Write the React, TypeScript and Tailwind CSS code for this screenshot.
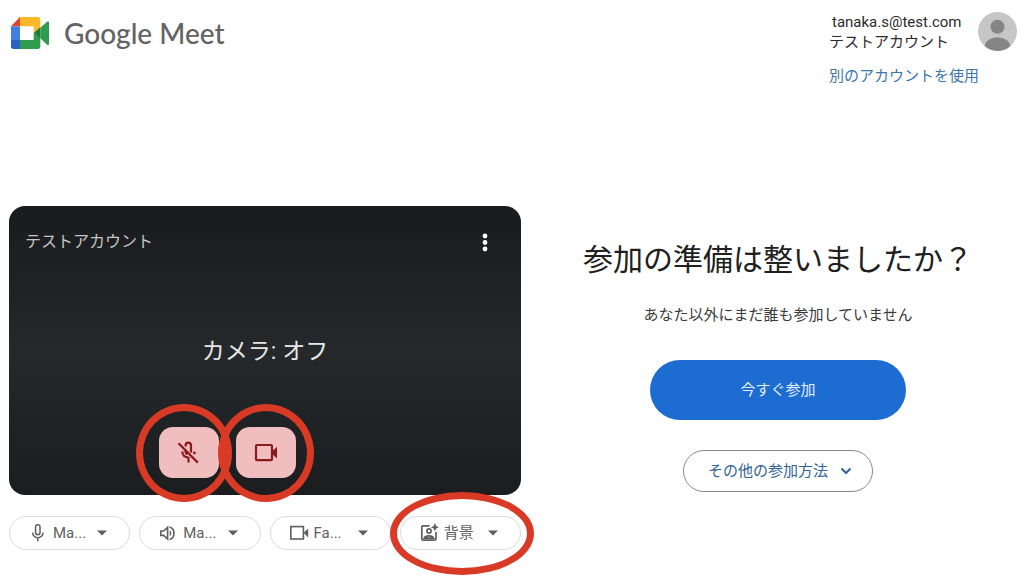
import type { ReactNode } from 'react'

const DEVICES: { name: string; label: string; icon: ReactNode }[] = [
  { name: 'マイク', label: 'Ma...', icon: <MicIcon /> },
  { name: 'スピーカー', label: 'Ma...', icon: <SpeakerIcon /> },
  { name: 'カメラ', label: 'Fa...', icon: <CameraIcon /> },
  { name: '背景', label: '背景', icon: <BackgroundIcon /> },
]

function MeetLogo() {
  return (
    <svg viewBox="0 0 114 96" width="38" height="32" aria-hidden="true">
      <path d="M27 0 0 28h27z" fill="#e2432e" />
      <path d="M27 0h53a8 8 0 0 1 8 8v24L68 48V28H27z" fill="#fbb829" />
      <path d="M0 28h27v41H0z" fill="#3f7fe0" />
      <path d="M0 69h27v27H8a8 8 0 0 1-8-8z" fill="#2a62c4" />
      <path d="M27 69h41V48l20 16v24a8 8 0 0 1-8 8H27z" fill="#2f9c50" />
      <path d="M88 32l20-18q6-4 6 3v63q0 7-6 3L88 64z" fill="#2f9c50" />
      <path d="M88 31v34L68 48z" fill="#1f7a3a" />
    </svg>
  )
}

function MicIcon() {
  return (
    <svg viewBox="0 0 20 20" width="20" height="20" fill="none" stroke="currentColor" strokeWidth={1.5} aria-hidden="true">
      <rect x="7.6" y="1.8" width="4.4" height="10" rx="2.2" />
      <path d="M4.6 9.5a5.2 5.2 0 0 0 10.4 0M9.800 14.7v3.6" />
    </svg>
  )
}

function SpeakerIcon() {
  return (
    <svg viewBox="0 0 20 20" width="20" height="20" fill="none" stroke="currentColor" strokeWidth={1.6} aria-hidden="true">
      <path d="M2.8 8v4.4h2.8l4 3.6V4.4L5.6 8z" />
      <path d="M11.7 7.2v6c2-1.2 2-4.8 0-6z" fill="currentColor" stroke="none" />
      <path d="M11.6 3.9c5.8 1.6 5.8 11 0 12.6" />
    </svg>
  )
}

function CameraIcon() {
  return (
    <svg viewBox="0 0 20 20" width="20" height="20" fill="none" stroke="currentColor" strokeWidth={1.6} aria-hidden="true">
      <rect x="1.8" y="3.6" width="12.6" height="12.4" />
      <path d="M14.6 9.8 19.2 5.4v9z" fill="currentColor" stroke="none" />
    </svg>
  )
}

function BackgroundIcon() {
  return (
    <svg viewBox="0 0 20 20" width="20" height="20" fill="none" stroke="currentColor" strokeWidth={1.7} aria-hidden="true">
      <path d="M10.500 2.8H4.200a1.4 1.4 0 0 0-1.4 1.4v11.600a1.4 1.4 0 0 0 1.4 1.4h11.4a1.4 1.4 0 0 0 1.4-1.4V9" />
      <circle cx="10" cy="8" r="2.1" />
      <path d="M5.2 15.200c1-3.2 8.400-3.200 9.400 0z" />
      <path d="M15.900 0l1.300 2.900 2.800 1.300-2.800 1.300-1.300 2.800-1.300-2.800-2.800-1.300 2.800-1.300z" fill="currentColor" stroke="none" />
    </svg>
  )
}

function MicOffIcon() {
  return (
    <svg viewBox="0 0 24 24" width="24" height="24" fill="none" stroke="currentColor" strokeWidth={2.2} aria-hidden="true">
      <path d="M1.500 2.200 20.800 21.600" />
      <path d="M8.600 5.600V4.400a2.700 2.700 0 0 1 5.400 0v7.200" />
      <path d="M5.400 10.400c-.2 4 2.500 6 6 6M11.500 16v5.600" />
      <path d="M8.600 9.500v1.500c0 1.200.7 2 1.900 2.300" />
      <circle cx="17.400" cy="12" r="1.400" fill="currentColor" stroke="none" />
    </svg>
  )
}

function VideoIcon() {
  return (
    <svg viewBox="0 0 24 24" width="24" height="24" fill="none" stroke="currentColor" strokeWidth={2.2} aria-hidden="true">
      <rect x="2" y="4" width="16" height="15.200" rx="1" />
      <path d="M18.500 10l4.500-4.200v11.600L18.500 13.200z" fill="currentColor" stroke="none" />
    </svg>
  )
}

function Header() {
  return (
    <header className="flex items-start justify-between pt-3 pr-[7px] pl-[11px]">
      <div className="flex items-center gap-[15px] pt-px">
        <MeetLogo />
        <span className="font-[Lato,sans-serif] text-[28px] leading-10 font-medium text-[#636363]">Google Meet</span>
      </div>
      <div className="w-[188px]">
        <div className="flex items-start justify-between">
          <div className="text-[15px] leading-5 text-[#2b2b2b]">
            <p className="pl-[3px]">tanaka.s@test.com</p>
            <p>テストアカウント</p>
          </div>
          <svg viewBox="0 0 39 39" width="39" height="39" role="img" aria-label="アカウント">
            <clipPath id="avatar">
              <circle cx="19.500" cy="19.500" r="19.500" />
            </clipPath>
            <g clipPath="url(#avatar)">
              <rect width="39" height="39" fill="#c6c6c6" />
              <circle cx="19.500" cy="14.700" r="7" fill="#858585" />
              <ellipse cx="19.500" cy="34.500" rx="12.800" ry="9.300" fill="#858585" />
            </g>
          </svg>
        </div>
        <a href="#switch" className="mt-[14px] block text-[15px] leading-5 whitespace-nowrap text-[#3a76ab]">
          別のアカウントを使用
        </a>
      </div>
    </header>
  )
}

function Preview() {
  return (
    <div className="relative flex aspect-[512/289] flex-col justify-between rounded-2xl bg-linear-to-b from-[#1a1c1e] from-5% via-[#25292b] via-50% to-[#1b1d1f] px-4 pt-[26px] pb-[17px]">
      <div className="flex items-center justify-between">
        <span className="text-base leading-5 text-[#c4c6c7]">テストアカウント</span>
        <button aria-label="その他のオプション" className="mr-[14px] text-white">
          <svg viewBox="0 0 12 20" width="12" height="20" fill="currentColor" aria-hidden="true">
            <circle cx="6" cy="4" r="2.400" />
            <circle cx="6" cy="10.500" r="2.400" />
            <circle cx="6" cy="17" r="2.400" />
          </svg>
        </button>
      </div>
      <p className="pt-6 text-center text-[23px] leading-8 text-[#e6e7e8]">カメラ: オフ</p>
      <div className="flex justify-center gap-[17px] pr-[75px]">
        <div className="relative">
          <button aria-label="マイクをオンにする" className="flex h-[51px] w-[60px] items-center justify-center rounded-[14px] bg-[#f0bebe] text-[#8c1a1d]">
            <MicOffIcon />
          </button>
          <Ring className="-top-[23px] -left-[23px] h-[98px] w-24" />
        </div>
        <div className="relative">
          <button aria-label="カメラをオンにする" className="flex h-[51px] w-[60px] items-center justify-center rounded-[14px] bg-[#f0bebe] text-[#8c1a1d]">
            <VideoIcon />
          </button>
          <Ring className="-top-[23px] -left-[18px] h-[98px] w-24" />
        </div>
      </div>
    </div>
  )
}

// Red callout drawn over a control
function Ring({ className }: { className: string }) {
  return <span className={`pointer-events-none absolute z-10 rounded-[50%] border-[7px] border-[#d93a25] ${className}`} />
}

function DeviceBar() {
  return (
    <div className="mt-[21px] flex gap-[9px]">
      {DEVICES.map(({ name, label, icon }) => (
        <div key={name} className="relative flex-1">
          <button
            aria-label={name}
            className="flex h-[34px] w-full items-center rounded-full border border-[#dcdcdc] pr-[22px] pl-[18px] text-[15px] leading-5 text-[#5f5f5f]"
          >
            {icon}
            <span className="ml-[5px] flex-1 text-left">{label}</span>
            <svg viewBox="0 0 10 6" width="10" height="6" fill="currentColor" aria-hidden="true">
              <path d="M0 .5h10L5 5.500z" />
            </svg>
          </button>
          {name === '背景' && <Ring className="-top-6 -left-[10px] h-[83px] w-36" />}
        </div>
      ))}
    </div>
  )
}

function JoinPanel() {
  return (
    <section className="ml-[11px] flex flex-1 flex-col items-center pt-[36px]">
      <h1 className="text-[30px] leading-9 text-[#202020]">参加の準備は整いましたか？</h1>
      <p className="mt-[27px] text-[15px] leading-5 text-[#3a3a3a]">あなた以外にまだ誰も参加していません</p>
      <button className="mt-[35px] h-[60px] w-64 rounded-full bg-[#1d6cd1] text-[15px] leading-5 text-[#e4effc]">
        今すぐ参加
      </button>
      <button className="mt-[30px] flex h-[42px] items-center gap-3 rounded-full border border-[#8a8a8a] px-5 pl-6 text-[15px] leading-5 text-[#2f6596]">
        その他の参加方法
        <svg viewBox="0 0 12 8" width="12" height="8" fill="none" stroke="currentColor" strokeWidth={2} aria-hidden="true">
          <path d="M1.500 1.500 6 6l4.500-4.500" />
        </svg>
      </button>
    </section>
  )
}

export default function App() {
  return (
    <div className="min-h-screen overflow-x-hidden bg-white font-[Roboto,'Noto_Sans_CJK_JP',sans-serif]" lang="ja">
      <Header />
      <main className="mt-[120px] flex items-start">
        <section className="ml-[9px] w-1/2 shrink-0">
          <Preview />
          <DeviceBar />
        </section>
        <JoinPanel />
      </main>
    </div>
  )
}
